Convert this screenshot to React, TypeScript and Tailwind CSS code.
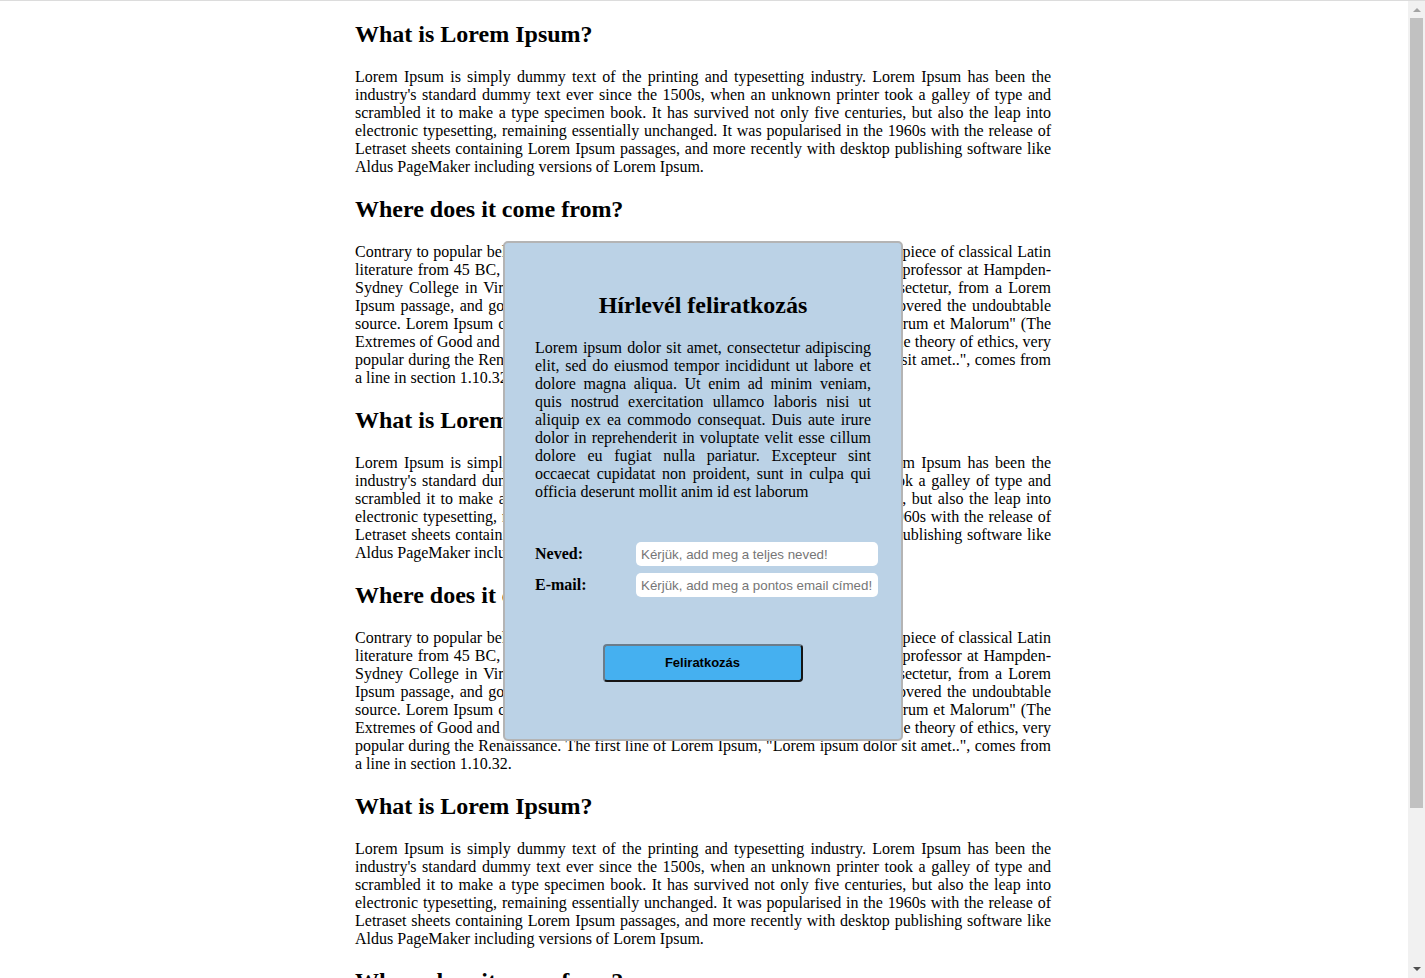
const lorem =
  "Lorem Ipsum is simply dummy text of the printing and typesetting industry. Lorem Ipsum has been the industry's standard dummy text ever since the 1500s, when an unknown printer took a galley of type and scrambled it to make a type specimen book. It has survived not only five centuries, but also the leap into electronic typesetting, remaining essentially unchanged. It was popularised in the 1960s with the release of Letraset sheets containing Lorem Ipsum passages, and more recently with desktop publishing software like Aldus PageMaker including versions of Lorem Ipsum.";

const origin =
  'Contrary to popular belief, Lorem Ipsum is not simply random text. It has roots in a piece of classical Latin literature from 45 BC, making it over 2000 years old. Richard McClintock, a Latin professor at Hampden-Sydney College in Virginia, looked up one of the more obscure Latin words, consectetur, from a Lorem Ipsum passage, and going through the cites of the word in classical literature, discovered the undoubtable source. Lorem Ipsum comes from sections 1.10.32 and 1.10.33 of "de Finibus Bonorum et Malorum" (The Extremes of Good and Evil) by Cicero, written in 45 BC. This book is a treatise on the theory of ethics, very popular during the Renaissance. The first line of Lorem Ipsum, "Lorem ipsum dolor sit amet..", comes from a line in section 1.10.32.';

const modalText =
  "Lorem ipsum dolor sit amet, consectetur adipiscing elit, sed do eiusmod tempor incididunt ut labore et dolore magna aliqua. Ut enim ad minim veniam, quis nostrud exercitation ullamco laboris nisi ut aliquip ex ea commodo consequat. Duis aute irure dolor in reprehenderit in voluptate velit esse cillum dolore eu fugiat nulla pariatur. Excepteur sint occaecat cupidatat non proident, sunt in culpa qui officia deserunt mollit anim id est laborum";

const sections = [
  { title: "What is Lorem Ipsum?", text: lorem },
  { title: "Where does it come from?", text: origin },
  { title: "What is Lorem Ipsum?", text: lorem },
  { title: "Where does it come from?", text: origin },
  { title: "What is Lorem Ipsum?", text: lorem },
  { title: "Where does it come from?", text: origin },
];

function Scrollbar() {
  return (
    <div className="w-[17px] shrink-0 bg-[#f1f1f1] flex flex-col items-center">
      <div className="h-[17px] flex items-center justify-center">
        <svg width="8" height="5" viewBox="0 0 8 5">
          <path d="M0 5 L4 1 L8 5 Z" fill="#a3a3a3" />
        </svg>
      </div>
      <div className="w-[13px] h-[790px] bg-[#c1c1c1]" />
      <div className="flex-1" />
      <div className="h-[17px] flex items-center justify-center">
        <svg width="8" height="5" viewBox="0 0 8 5">
          <path d="M0 0 L8 0 L4 4 Z" fill="#505050" />
        </svg>
      </div>
    </div>
  );
}

export default function App() {
  return (
    <div className="h-screen overflow-hidden flex bg-white border-t border-[#dcdcdc] text-black font-['Liberation_Serif','Times_New_Roman',serif]">
      <div className="flex-1 min-w-0 overflow-hidden">
        <div className="w-[696px] ml-[355px]">
          {sections.map((s, i) => (
            <div key={i}>
              <h2 className="text-[24px] leading-[27px] font-bold my-[20px]">{s.title}</h2>
              <p className="text-[16px] leading-[18px] text-justify my-[16px]">{s.text}</p>
            </div>
          ))}
        </div>
      </div>
      <Scrollbar />

      <div className="fixed left-[503px] top-[241px] w-[400px] h-[500px] bg-[#bbd2e6] border-2 border-[#b4b4b4] rounded-[5px] px-[30px] pt-[30px]">
        <h2 className="text-[24px] leading-[27px] font-bold text-center mt-[19px] mb-[20px]">Hírlevél feliratkozás</h2>
        <p className="text-[16px] leading-[18px] text-justify">{modalText}</p>
        <form className="mt-[41px]" onSubmit={(e) => e.preventDefault()}>
          <div className="flex items-center h-[24px]">
            <label className="w-[101px] shrink-0 font-bold text-[16px]">Neved:</label>
            <input
              type="text"
              placeholder="Kérjük, add meg a teljes neved!"
              className="w-[242px] shrink-0 h-[24px] bg-white rounded-[5px] px-[5px] outline-none text-[13.33px] font-['Liberation_Sans',Arial,sans-serif] placeholder:text-[#767676]"
            />
          </div>
          <div className="flex items-center h-[24px] mt-[7px]">
            <label className="w-[101px] shrink-0 font-bold text-[16px]">E-mail:</label>
            <input
              type="email"
              placeholder="Kérjük, add meg a pontos email címed!"
              className="w-[242px] shrink-0 h-[24px] bg-white rounded-[5px] px-[5px] outline-none text-[13.33px] font-['Liberation_Sans',Arial,sans-serif] placeholder:text-[#767676]"
            />
          </div>
          <div className="flex justify-center mt-[47px] pr-px">
            <button
              type="submit"
              className="w-[200px] h-[38px] bg-[#45b0f0] rounded-[4px] border-2 border-t-[#6b7c8a] border-l-[#6b7c8a] border-b-[#151515] border-r-[#151515] font-bold text-[13px] font-['Liberation_Sans',Arial,sans-serif]"
            >
              Feliratkozás
            </button>
          </div>
        </form>
      </div>
    </div>
  );
}
